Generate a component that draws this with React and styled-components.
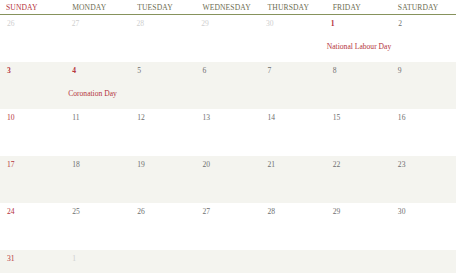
import React from "react";
import styled, { createGlobalStyle } from "styled-components";

const Global = createGlobalStyle`
  html, body { margin: 0; padding: 0; background: #fff; }
  body { font-family: "Liberation Serif", "DejaVu Serif", serif; overflow: hidden; }
`;

const Calendar = styled.div`
  width: 456px;
  display: flex;
  flex-direction: column;
`;

const HeaderRow = styled.div`
  display: grid;
  grid-template-columns: repeat(7, 1fr);
  height: 13.5px;
  border-bottom: 1.5px solid #86925c;
`;

const HeaderCell = styled.div`
  padding: 4px 0 0 ${(p) => (p.$first ? 6 : 7)}px;
  font-size: 7.6px;
  line-height: 8px;
  color: ${(p) => (p.$sunday ? "#b5343c" : "#6d6d52")};
  letter-spacing: 0.1px;
`;

const WeekRow = styled.div`
  display: grid;
  grid-template-columns: repeat(7, 1fr);
  height: 47.2px;
  background: ${(p) => (p.$shaded ? "#f4f4ef" : "#ffffff")};
`;

const DayCell = styled.div`
  display: flex;
  flex-direction: column;
  padding: 4px 0 0 7px;
`;

const DayNumber = styled.span`
  font-size: 7.6px;
  line-height: 9px;
  font-weight: ${(p) => (p.$bold ? 700 : 400)};
  color: ${(p) =>
    p.$muted ? "#cfcfcf" : p.$red ? "#b5343c" : "#6f6f6f"};
`;

const EventLabel = styled.span`
  margin-top: 14px;
  margin-left: -4px;
  font-size: 7.6px;
  line-height: 9px;
  color: #b5343c;
  white-space: nowrap;
`;

const days = ["SUNDAY", "MONDAY", "TUESDAY", "WEDNESDAY", "THURSDAY", "FRIDAY", "SATURDAY"];

const weeks = [
  [{ n: 26, m: 1 }, { n: 27, m: 1 }, { n: 28, m: 1 }, { n: 29, m: 1 }, { n: 30, m: 1 }, { n: 1, b: 1, e: "National Labour Day" }, { n: 2 }],
  [{ n: 3 }, { n: 4, b: 1, e: "Coronation Day" }, { n: 5 }, { n: 6 }, { n: 7 }, { n: 8 }, { n: 9 }],
  [{ n: 10 }, { n: 11 }, { n: 12 }, { n: 13 }, { n: 14 }, { n: 15 }, { n: 16 }],
  [{ n: 17 }, { n: 18 }, { n: 19 }, { n: 20 }, { n: 21 }, { n: 22 }, { n: 23 }],
  [{ n: 24 }, { n: 25 }, { n: 26 }, { n: 27 }, { n: 28 }, { n: 29 }, { n: 30 }],
  [{ n: 31 }, { n: 1, m: 1 }, null, null, null, null, null],
];

export default function App() {
  return (
    <>
      <Global />
      <Calendar>
        <HeaderRow>
          {days.map((d, i) => (
            <HeaderCell key={d} $sunday={i === 0} $first={i === 0}>
              {d}
            </HeaderCell>
          ))}
        </HeaderRow>
        {weeks.map((w, wi) => (
          <WeekRow key={wi} $shaded={wi % 2 === 1}>
            {w.map((c, ci) => (
              <DayCell key={ci}>
                {c && (
                  <DayNumber
                    $muted={c.m}
                    $red={(ci === 0 && !c.m) || c.b}
                    $bold={c.b || (ci === 0 && wi === 1)}
                  >
                    {c.n}
                  </DayNumber>
                )}
                {c && c.e && <EventLabel>{c.e}</EventLabel>}
              </DayCell>
            ))}
          </WeekRow>
        ))}
      </Calendar>
    </>
  );
}
